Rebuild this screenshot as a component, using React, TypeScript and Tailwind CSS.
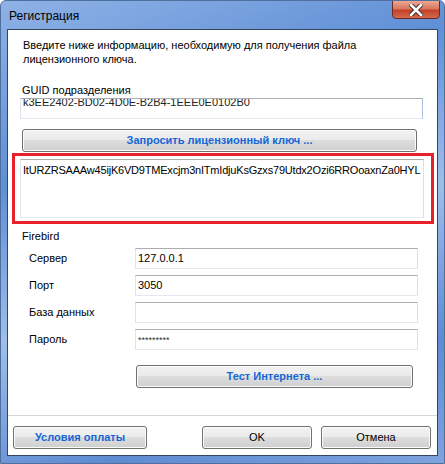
const font = "font-['Liberation_Sans',Arial,sans-serif]";

const btn =
  "flex items-center justify-center h-[23px] rounded-[3px] border border-[#707070] bg-[linear-gradient(to_bottom,#f2f2f2_0%,#ebebeb_45%,#dddddd_50%,#cfcfcf_100%)] shadow-[inset_0_0_0_1px_#fcfcfc] text-[11px]";

function Field({ label, value, small }: { label: string; value?: string; small?: boolean }) {
  return (
    <div className="flex items-center h-[21px]">
      <div className="w-[127px] pl-[21px] text-[11px] text-black">{label}</div>
      <div className="w-[283px] h-[21px] border border-[#abadb3] border-l-[#e2e3ea] border-r-[#dbdfe6] border-b-[#e3e9ef] bg-white flex items-center pl-[2px]">
        <span className={small ? "text-[9px] leading-[9px] mt-[2px] text-[#333]" : "text-[11px] text-black"}>{value}</span>
      </div>
    </div>
  );
}

export default function App() {
  return (
    <div className={`${font} w-[445px] h-[464px] flex flex-col bg-[linear-gradient(160deg,#8fb2e6_0%,#5f8fd6_30%,#9fbeea_55%,#5f8bd2_80%,#7ea3de_100%)] border border-[#4f6f9e] rounded-t-[6px] relative overflow-hidden`}>
      {/* title bar */}
      <div className="h-[28px] flex items-center pl-[8px] pt-[2px]">
        <span className="text-[12px] text-black">Регистрация</span>
      </div>
      <div className="absolute right-[4px] top-[-1px] w-[48px] h-[19px] rounded-b-[4px] border border-[#6b2a22] bg-[linear-gradient(to_bottom,#eaa894_0%,#d9785f_45%,#c54128_55%,#d46a4c_100%)] flex items-center justify-center">
        <svg width="14" height="12" viewBox="0 0 14 12">
          <path d="M2 1 L12 11 M12 1 L2 11" stroke="#3a2a2a" strokeWidth="4.5" strokeLinecap="square" />
          <path d="M2 1 L12 11 M12 1 L2 11" stroke="#ffffff" strokeWidth="2.6" strokeLinecap="square" />
        </svg>
      </div>

      {/* client area */}
      <div className="mx-[6px] h-[427px] border border-[#34465e] bg-white flex flex-col">
        <div className="pl-[15px] pt-[8px] text-[11px] leading-[14px] text-black">
          <p>Введите ниже информацию, необходимую для получения файла</p>
          <p>лицензионного ключа.</p>
        </div>
        <div className="pl-[14px] mt-[17px] text-[11px] leading-[14px] text-black">GUID подразделения</div>
        <div className="ml-[12px] mt-[1px] w-[403px] h-[21px] border border-[#abadb3] border-l-[#e2e3ea] border-r-[#a9c3e6] border-b-[#e3e9ef] bg-white overflow-hidden">
          <div className="pl-[2px] mt-[-4px] text-[11px] leading-[14px] text-[#222]">k3EE2402-BD02-4D0E-B2B4-1EEE0E0102B0</div>
        </div>
        <div className={`${btn} ml-[14px] mt-[10px] w-[395px] font-bold text-[#1466d6]`}>Запросить лицензионный ключ ...</div>

        <div className="ml-[4px] mt-[1px] w-[422px] h-[71px] border-[3px] border-[#e8202a] flex pt-[3px] pl-[5px]">
          <div className="w-[404px] h-[59px] border border-[#abadb3] border-l-[#e2e3ea] border-r-[#dbdfe6] border-b-[#e3e9ef] bg-white pl-[2px] pt-[3px] text-[11px] leading-[14px] tracking-[-0.2px] text-black whitespace-nowrap">
            ItURZRSAAAw45ijK6VD9TMExcjm3nITmIdjuKsGzxs79Utdx2Ozi6RROoaxnZa0HYL
          </div>
        </div>

        <div className="pl-[14px] mt-[5px] text-[11px] leading-[14px] text-black">Firebird</div>
        <div className="mt-[5px] flex flex-col gap-[6px]">
          <Field label="Сервер" value="127.0.0.1" />
          <Field label="Порт" value="3050" />
          <Field label="База данных" />
          <Field label="Пароль" value="*********" small />
        </div>
        <div className={`${btn} ml-[128px] mt-[15px] w-[277px] font-bold text-[#1466d6]`}>Тест Интернета ...</div>

        <div className="mt-[27px] border-t border-[#d5d5d5]" />
        <div className="mt-[10px] flex items-center pl-[5px]">
          <div className={`${btn} w-[134px] font-bold text-[#1466d6]`}>Условия оплаты</div>
          <div className={`${btn} ml-[55px] w-[110px] text-black`}>OK</div>
          <div className={`${btn} ml-[9px] w-[110px] text-black`}>Отмена</div>
        </div>
      </div>
    </div>
  );
}
